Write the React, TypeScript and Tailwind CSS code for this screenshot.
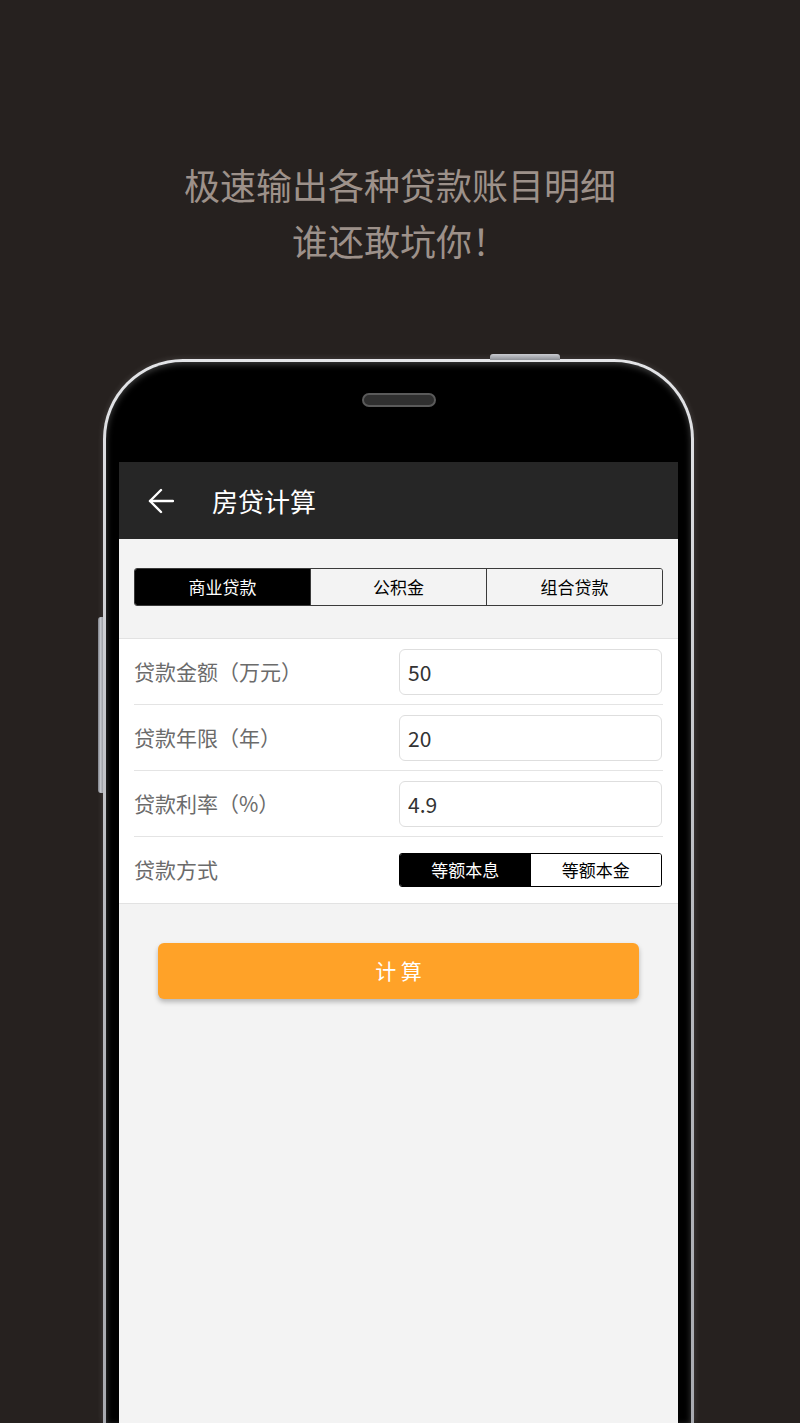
import { useState } from 'react';

const FIELDS = [
  { label: '贷款金额（万元）', value: '50' },
  { label: '贷款年限（年）', value: '20' },
  { label: '贷款利率（%）', value: '4.9' },
];

const LOAN_TYPES = ['商业贷款', '公积金', '组合贷款'];
const REPAY_TYPES = ['等额本息', '等额本金'];

function BackArrow() {
  return (
    <svg width="26" height="26" viewBox="0 0 26 26" fill="none" stroke="white" strokeWidth="2.4" strokeLinecap="round" strokeLinejoin="round">
      <path d="M2 13H25" />
      <path d="M13 2L2 13L13 24" />
    </svg>
  );
}

export default function App() {
  const [loanType, setLoanType] = useState(0);
  const [repayType, setRepayType] = useState(0);
  const [values, setValues] = useState(FIELDS.map((f) => f.value));

  return (
    <div
      className="w-[800px] h-[1423px] overflow-hidden bg-[#26211f] flex flex-col"
      style={{ fontFamily: '"Noto Sans CJK SC", "Noto Sans", sans-serif' }}
    >
      {/* Headline */}
      <div className="pt-[156px] text-center text-[36px] leading-[56px] text-[#9d918a]">
        <div>极速输出各种贷款账目明细</div>
        <div>谁还敢坑你！</div>
      </div>

      {/* Phone */}
      <div className="relative mt-[91px] ml-[103px] w-[591px] shrink-0">
        {/* top power button */}
        <div className="absolute -top-[5px] left-[387px] w-[70px] h-[6px] rounded-t-[3px] bg-gradient-to-b from-[#c9cbd0] to-[#8d9096]" />
        {/* left side button */}
        <div className="absolute top-[258px] -left-[5px] w-[5px] h-[176px] rounded-l-[3px] bg-gradient-to-r from-[#7d8088] via-[#c4c7cd] to-[#9a9ca2]" />

        <div className="rounded-t-[80px] p-[3px] pb-0 bg-gradient-to-b from-[#e4e5e8] via-[#b9bbc0] to-[#a8aab0] shadow-[0_0_6px_rgba(255,255,255,0.15)]">
          <div className="rounded-t-[77px] bg-black px-[13px] pt-[31px] shadow-[inset_0_2px_6px_rgba(255,255,255,0.25)]">
            {/* speaker */}
            <div className="mx-auto w-[74px] h-[14px] rounded-full border-2 border-[#5a5a5a] bg-[#2f2f2f]" />

            {/* Screen */}
            <div className="mt-[55px] bg-[#f3f3f3] h-[961px]">
              {/* Title bar */}
              <div className="h-[77px] bg-[#262626] flex items-center pl-[29px]">
                <BackArrow />
                <span className="ml-[38px] text-[26px] text-white">房贷计算</span>
              </div>

              {/* Loan type segments */}
              <div className="px-[15px] pt-[29px] pb-[32px]">
                <div className="flex h-[38px] rounded-[3px] border border-[#3a3a3a] overflow-hidden">
                  {LOAN_TYPES.map((t, i) => (
                    <button
                      key={t}
                      onClick={() => setLoanType(i)}
                      className={`flex-1 flex items-center justify-center text-[17px] ${
                        i > 0 ? 'border-l border-[#3a3a3a]' : ''
                      } ${loanType === i ? 'bg-black text-white' : 'bg-[#f3f3f3] text-black'}`}
                    >
                      {t}
                    </button>
                  ))}
                </div>
              </div>

              {/* Form */}
              <div className="bg-white border-t border-b border-[#e2e2e2]">
                {FIELDS.map((f, i) => (
                  <div key={f.label} className="px-[15px]">
                    <div className="h-[66px] flex items-center border-b border-[#e4e4e4]">
                      <span className="w-[265px] text-[21px] text-[#6b6b6b]">{f.label}</span>
                      <input
                        className="w-[263px] h-[46px] rounded-[6px] border border-[#dedede] px-[8px] text-[21px] text-[#333] outline-none"
                        value={values[i]}
                        onChange={(e) => {
                          const next = [...values];
                          next[i] = e.target.value;
                          setValues(next);
                        }}
                      />
                    </div>
                  </div>
                ))}
                <div className="px-[15px]">
                  <div className="h-[66px] flex items-center">
                    <span className="w-[265px] text-[21px] text-[#6b6b6b]">贷款方式</span>
                    <div className="flex w-[263px] h-[34px] rounded-[3px] border border-black overflow-hidden">
                      {REPAY_TYPES.map((t, i) => (
                        <button
                          key={t}
                          onClick={() => setRepayType(i)}
                          className={`flex-1 flex items-center justify-center text-[17px] ${
                            repayType === i ? 'bg-black text-white' : 'bg-white text-black'
                          }`}
                        >
                          {t}
                        </button>
                      ))}
                    </div>
                  </div>
                </div>
              </div>

              {/* Calculate */}
              <div className="pt-[39px] pl-[39px]">
                <button className="w-[481px] h-[56px] rounded-[6px] bg-[#ffa228] text-white text-[21px] shadow-[0_3px_5px_rgba(0,0,0,0.25)]">
                  计 算
                </button>
              </div>
            </div>
          </div>
        </div>
      </div>
    </div>
  );
}
